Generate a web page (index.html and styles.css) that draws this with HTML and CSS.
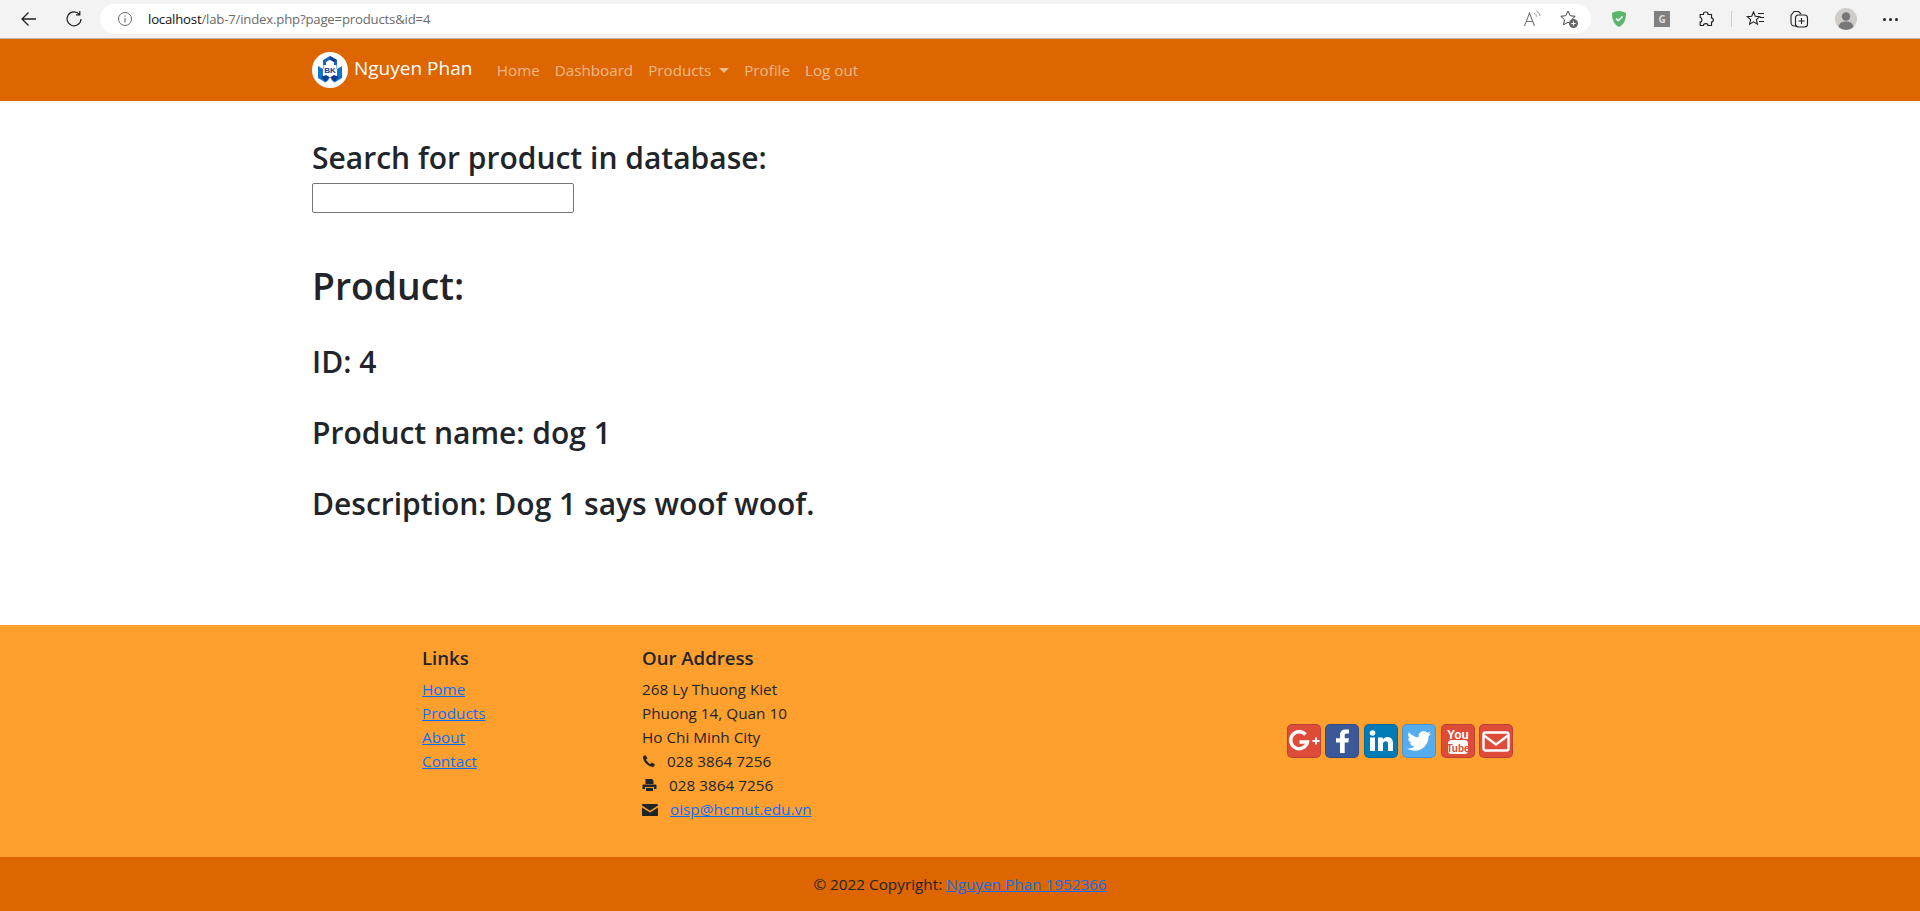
FILE: index.html
```html
<!DOCTYPE html>
<html>
<head lang="en">
    <meta charset="UTF-8">
    <title>Product</title>
    <link rel="stylesheet" href="styles.css">
</head>
<body>
<div class="browser">
    <svg class="tb back" width="18" height="18" viewBox="0 0 18 18"><path d="M16 9H2M8.500 2.500 2 9l6.500 6.500" fill="none" stroke="#222" stroke-width="1.300"/></svg>
    <svg class="tb reload" width="18" height="18" viewBox="0 0 18 18"><path d="M14.500 4.500A7 7 0 1 0 16 9M14.800 1v3.800H11" fill="none" stroke="#222" stroke-width="1.200"/></svg>
    <div class="address">
        <svg class="info" width="16" height="16" viewBox="0 0 16 16"><circle cx="8" cy="8" r="6.500" fill="none" stroke="#666"/><path d="M8 7v4.500M8 4.500v1.200" stroke="#666" stroke-width="1.100"/></svg>
        <span class="url"><b>localhost</b>/lab-7/index.php?page=products&amp;id=4</span>
        <svg class="aloud" width="20" height="18" viewBox="0 0 20 18"><path d="M1.500 16 6.500 3l5 13M3.200 11.500h6.600" fill="none" stroke="#777" stroke-width="1.100"/><path d="M11 3c1.500.8 2.300 2 2.500 3.500M13.500 1c2 1.200 3.200 3 3.500 5" fill="none" stroke="#888"/></svg>
        <svg class="addfav" width="20" height="20" viewBox="0 0 20 20"><path d="M9 2l2.200 4.700 5 .6-3.700 3.500 1 5L9 13.300 4.500 15.800l1-5L1.800 7.300l5-.6z" fill="none" stroke="#444"/><circle cx="14.500" cy="14.500" r="4.500" fill="#666"/><path d="M12.300 14.500h4.400M14.500 12.300v4.400" stroke="#fff"/></svg>
    </div>
    <svg class="tb shield" width="18" height="18" viewBox="0 0 18 18"><path d="M9 1c3 0 5 1 7 2 0 7-2 11.500-7 14C4 14.500 2 10 2 3c2-1 4-2 7-2z" fill="#5cb56a"/><path d="M6 8.500l2.300 2.300L12.500 6.500" fill="none" stroke="#fff" stroke-width="1.500"/></svg>
    <span class="gbox">G</span>
    <svg class="tb puzzle" width="18" height="18" viewBox="0 0 18 18"><path d="M6.500 3.500C6.500 1.500 11 1.500 11 3.500v1h3.500v3.300c2.300 0 2.300 4.400 0 4.400v3.300H11c0-2.500-4.500-2.500-4.500 0H3.200v-3.500c2.200 0 2.200-4.500 0-4.500V4.500h3.300z" fill="none" stroke="#222" stroke-width="1.200"/></svg>
    <span class="divider"></span>
    <svg class="tb favs" width="20" height="18" viewBox="0 0 20 18"><path d="M7.500 2l1.800 4.300 4.400.4-3.300 3 1 4.500-3.900-2.400-3.900 2.400 1-4.500-3.300-3 4.400-.4z" fill="none" stroke="#222" stroke-width="1.100"/><path d="M12 3.500h6M14 7.500h4M13 11.500h5" stroke="#222" stroke-width="1.100"/></svg>
    <svg class="tb colls" width="20" height="20" viewBox="0 0 20 20"><path d="M8 17H5.500C3.500 17 2 15.500 2 13.500V6.500L5 2.500h4.500L12 5" fill="none" stroke="#222" stroke-width="1.100"/><rect x="6.500" y="6" width="12" height="12" rx="3" fill="none" stroke="#222" stroke-width="1.100"/><path d="M12.500 9v6M9.500 12h6" stroke="#222" stroke-width="1.100"/></svg>
    <svg class="avatar" width="22" height="22" viewBox="0 0 22 22"><circle cx="11" cy="11" r="11" fill="#cfccc8"/><circle cx="11" cy="8.500" r="4.200" fill="#777"/><path d="M3.500 19c1-4.500 4-5.500 7.500-5.500s6.500 1 7.500 5.500a11 11 0 0 1-15 0z" fill="#777"/></svg>
    <span class="dots"><i></i><i></i><i></i></span>
</div>

<nav class="navbar">
    <a class="brand" href="#">
        <svg class="logo" width="36" height="36" viewBox="0 0 36 36">
            <circle cx="18" cy="18" r="18" fill="#fff"/>
            <path d="M18 4l7 4v9l-3-1.500V10l-4-2.300L14 10v5.500L11 17V8z" fill="#1e63b8"/>
            <path d="M18 4l7 4-3 2-4-2.300z" fill="#0d3f96"/>
            <path d="M6 14l5 3v7l6 3.500-3.500 3L6 26z" fill="#1274c9"/>
            <path d="M30 14l-5 3v7l-6 3.500 3.500 3L30 26z" fill="#1274c9"/>
            <path d="M9 25l5-2 4 2.500-4.500 4z" fill="#0b3c8f"/>
            <path d="M27 25l-5-2-4 2.500 4.500 4z" fill="#0b3c8f"/>
            <rect x="11.500" y="13" width="13" height="10" fill="#fff"/>
            <text x="18" y="20.800" class="logo-text" text-anchor="middle">BK</text>
        </svg>
        <span class="brand-name">Nguyen Phan</span>
    </a>
    <ul class="nav-links">
        <li><a href="#">Home</a></li>
        <li><a href="#">Dashboard</a></li>
        <li><a href="#" class="dropdown">Products</a></li>
        <li><a href="#">Profile</a></li>
        <li><a href="#">Log out</a></li>
    </ul>
</nav>

<div class="content">
    <h3 class="search-title">Search for product in database:</h3>
    <input class="search-box" type="text">
    <h1 class="product-title">Product:</h1>
    <h3 class="row-id">ID: 4</h3>
    <h3>Product name: dog 1</h3>
    <h3>Description: Dog 1 says woof woof.</h3>
</div>

<footer class="footer">
    <div class="col-links">
        <h5>Links</h5>
        <ul>
            <li><a href="#">Home</a></li>
            <li><a href="#">Products</a></li>
            <li><a href="#">About</a></li>
            <li><a href="#">Contact</a></li>
        </ul>
    </div>
    <div class="col-address">
        <h5>Our Address</h5>
        <address>
            268 Ly Thuong Kiet<br>
            Phuong 14, Quan 10<br>
            Ho Chi Minh City<br>
            <svg class="fa phone" width="14" height="14" viewBox="0 0 14 14"><path d="M3.300 1L1 2.500C.8 7.500 6 13 11.500 13L13 10.500 9.800 8.500 8.300 10C6.800 9.500 4.500 7 4 5.600L5.500 4.200z" fill="#212529"/></svg>028 3864 7256<br>
            <svg class="fa print" width="15" height="14" viewBox="0 0 15 14"><path d="M3.500 1h6.500l1.500 1.500V6h-8zM1.500 6.500h12c.6 0 1 .4 1 1V11h-2.500V9H3v2H.5V7.500c0-.6.4-1 1-1zM4 10h7v3H4z" fill="#212529"/></svg>028 3864 7256<br>
            <svg class="fa mail" width="16" height="12" viewBox="0 0 16 12"><path d="M1 0h14c.6 0 1 .4 1 1v.6L8 6.800 0 1.600V1c0-.6.4-1 1-1zM0 3.400l8 5.200 8-5.200V11c0 .6-.4 1-1 1H1c-.6 0-1-.4-1-1z" fill="#212529"/></svg><a href="#">oisp@hcmut.edu.vn</a>
        </address>
    </div>
    <div class="social">
        <a class="btn-social google" href="#"><svg width="32" height="32" viewBox="0 0 32 32"><path d="M17.500 9.500A8.500 8.500 0 1 0 19.500 17H11.500" fill="none" stroke="#fff" stroke-width="3.400"/><path d="M24.500 16h7M28 12.500v7" stroke="#fff" stroke-width="2"/></svg></a>
        <a class="btn-social facebook" href="#"><svg width="32" height="32" viewBox="0 0 32 32"><path d="M14 28V17.500h-4v-4.300h4v-3C14 6.500 16.200 4.500 19.500 4.500H23v4h-2.300c-1.600 0-2 .8-2 2v2.700h4.200l-.6 4.300h-3.600V28z" fill="#fff"/></svg></a>
        <a class="btn-social linkedin" href="#"><svg width="32" height="32" viewBox="0 0 32 32"><circle cx="7.500" cy="8" r="2.800" fill="#fff"/><path d="M5 12.500h5V26H5zM13 12.500h4.800v2c1-1.500 2.500-2.400 4.500-2.400 4 0 5.700 2.500 5.700 6.500V26h-5v-6.800c0-2-.6-3-2.200-3-1.700 0-2.800 1.100-2.800 3.100V26h-5z" fill="#fff"/></svg></a>
        <a class="btn-social twitter" href="#"><svg width="32" height="32" viewBox="0 0 32 32"><path d="M28 8.500c-.9.400-1.800.7-2.800.8 1-.6 1.800-1.600 2.200-2.700-1 .6-2 1-3.100 1.200a4.900 4.900 0 0 0-8.400 4.500C11.800 12.100 8.200 10.200 5.800 7.200c-1.300 2.200-.6 5 1.500 6.500-.8 0-1.500-.2-2.200-.6 0 2.400 1.700 4.400 3.900 4.900-.7.200-1.500.2-2.200.1.600 2 2.400 3.300 4.600 3.400-2.100 1.600-4.700 2.300-7.300 2 2.200 1.400 4.800 2.200 7.500 2.200 9 0 14.200-7.600 13.900-14.500 1-.7 1.800-1.600 2.500-2.700z" fill="#fff"/></svg></a>
        <a class="btn-social youtube" href="#"><svg width="32" height="32" viewBox="0 0 32 32"><rect x="6" y="15" width="20" height="14" rx="3.500" fill="#fff"/><text x="16" y="13.500" class="yt-you" text-anchor="middle">You</text><text x="16" y="26.500" class="yt-tube" text-anchor="middle">Tube</text></svg></a>
        <a class="btn-social mailbox" href="#"><svg width="32" height="32" viewBox="0 0 32 32"><rect x="3.500" y="7.500" width="25" height="18" rx="2" fill="none" stroke="#fff" stroke-width="2.400"/><path d="M4 10.500l12 9 12-9" fill="none" stroke="#fff" stroke-width="2.400"/></svg></a>
    </div>
</footer>

<div class="copyright">© 2022 Copyright: <a href="#">Nguyen Phan 1952366</a></div>
</body>
</html>
```

FILE: styles.css
```css
* {
    box-sizing: border-box;
}
html, body {
    margin: 0;
    padding: 0;
}
body {
    font-family: "Open Sans", "Noto Sans", sans-serif;
    font-size: 15px;
    line-height: 24px;
    color: #212529;
    background: #fff;
    overflow: hidden;
}
a {
    color: #0d6efd;
}
h1, h3, h5 {
    margin: 0;
    font-weight: 600;
}

/* browser bar */
.browser {
    display: flex;
    align-items: center;
    height: 39px;
    background: #f3f3f3;
    border-bottom: 1px solid #b9b5b0;
}
.tb {
    flex: none;
}
.back {
    margin-left: 20px;
}
.reload {
    margin-left: 27px;
}
.address {
    display: flex;
    align-items: center;
    width: 1491px;
    height: 30px;
    margin-left: 17px;
    padding: 0 12px 0 17px;
    background: #fff;
    border-radius: 15px;
}
.url {
    margin-left: 15px;
    flex: 1;
    font-family: "Open Sans", sans-serif;
    font-size: 13.200px;
    letter-spacing: -.2px;
    color: #6b6b6b;
}
.url b {
    font-weight: 400;
    color: #111;
}
.addfav {
    margin-left: 16px;
}
.shield {
    margin-left: 19px;
}
.gbox {
    width: 16px;
    height: 16px;
    margin-left: 26px;
    background: #808080;
    color: #ddd;
    font-size: 10px;
    font-weight: 700;
    line-height: 16px;
    text-align: center;
}
.puzzle {
    margin-left: 27px;
}
.divider {
    width: 1px;
    height: 16px;
    margin-left: 16px;
    background: #ccc;
}
.favs {
    margin-left: 14px;
}
.colls {
    margin-left: 23px;
}
.avatar {
    margin-left: 26px;
}
.dots {
    display: flex;
    gap: 3px;
    margin-left: 26px;
}
.dots i {
    width: 3px;
    height: 3px;
    background: #222;
    border-radius: 50%;
}

/* navbar */
.navbar {
    display: flex;
    align-items: center;
    height: 62px;
    padding-left: 312px;
    background: #dd6600;
}
.brand {
    display: flex;
    align-items: center;
    gap: 6px;
    margin-right: 17px;
    color: #fff;
    font-size: 19px;
    text-decoration: none;
}
.brand-name {
    padding-bottom: 5px;
}
.logo-text {
    font-family: "Liberation Sans", sans-serif;
    font-size: 8px;
    font-weight: 700;
    fill: #14418f;
}
.nav-links {
    display: flex;
    margin: 0;
    padding: 0;
    list-style: none;
}
.nav-links a {
    display: block;
    padding: 8px 7.500px;
    font-size: 15.200px;
    color: rgba(255, 255, 255, .55);
    text-decoration: none;
}
.dropdown::after {
    content: "";
    display: inline-block;
    margin-left: 8px;
    vertical-align: 3px;
    border-top: 5px solid;
    border-left: 5px solid transparent;
    border-right: 5px solid transparent;
}

/* main part */
.content {
    height: 524px;
    padding: 38px 0 0 312px;
}
.content h3 {
    font-size: 30px;
    line-height: 38px;
    margin-bottom: 33px;
}
.content .search-title {
    margin-bottom: 6px;
}
.search-box {
    display: block;
    width: 262px;
    height: 30px;
    padding: 1px 2px;
    border: 1px solid #767676;
    border-radius: 2px;
    background: #fff;
}
.content .product-title {
    font-size: 37.300px;
    line-height: 48px;
    margin: 49px 0 33px;
}
.content .row-id {
    margin-bottom: 33px;
}

/* footer */
.footer {
    position: relative;
    display: flex;
    height: 232px;
    padding: 20px 0 0 422px;
    background: #ff9f2e;
    font-size: 15.300px;
}
.footer h5 {
    font-size: 18.600px;
    line-height: 26px;
    margin-bottom: 6px;
}
.col-links {
    width: 220px;
}
.col-links ul {
    margin: 0;
    padding: 0;
    list-style: none;
}
.col-address {
    width: 645px;
}
address {
    font-style: normal;
}
.fa {
    vertical-align: -1px;
}
.phone {
    margin-right: 11px;
}
.print {
    margin-right: 12px;
}
.mail {
    margin-right: 12px;
}
.social {
    display: flex;
    align-items: center;
    gap: 4.400px;
    height: 191px;
}
.btn-social {
    display: block;
    width: 34px;
    height: 34px;
    border: 1px solid rgba(0, 0, 0, .15);
    border-radius: 5px;
}
.btn-social svg {
    display: block;
}
.google {
    background: #dd4b39;
}
.facebook {
    background: #3b5998;
}
.linkedin {
    background: #007bb6;
}
.twitter {
    background: #55acee;
}
.youtube {
    background: #dd4b39;
}
.mailbox {
    background: #dd4b39;
}
.yt-you {
    font-family: "Liberation Sans", sans-serif;
    font-size: 12px;
    font-weight: 700;
    fill: #fff;
}
.yt-tube {
    font-family: "Liberation Sans", sans-serif;
    font-size: 10px;
    font-weight: 700;
    fill: #dd4b39;
}

.copyright {
    height: 54px;
    background: #dd6600;
    font-size: 15.300px;
    line-height: 54px;
    text-align: center;
}
```
